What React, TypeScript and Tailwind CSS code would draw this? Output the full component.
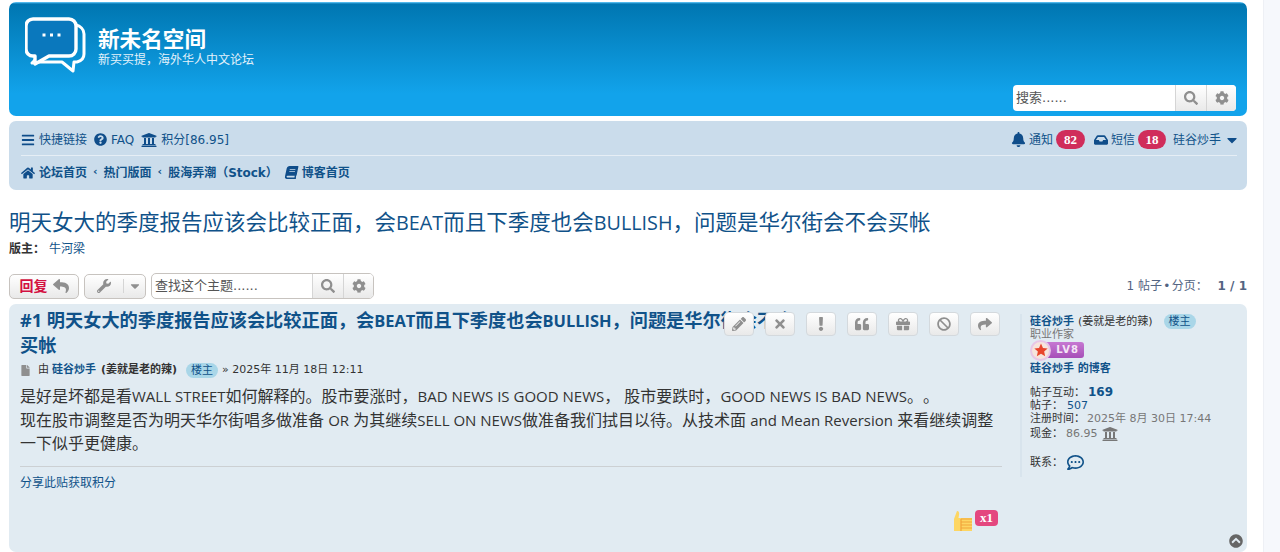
import {
  FaBars,
  FaBan,
  FaBell,
  FaBook,
  FaCaretDown,
  FaChevronCircleUp,
  FaCog,
  FaExclamation,
  FaFile,
  FaGift,
  FaHome,
  FaInbox,
  FaPencilAlt,
  FaQuestionCircle,
  FaQuoteLeft,
  FaRegCommentDots,
  FaReply,
  FaSearch,
  FaShare,
  FaTimes,
  FaUniversity,
  FaWrench,
} from "react-icons/fa";

const sans = "font-['DejaVu_Sans','Noto_Sans_CJK_SC',sans-serif]";
const body = "font-['Open_Sans','Noto_Sans_CJK_SC',sans-serif] [text-spacing-trim:space-all]";

function Logo() {
  return (
    <svg width="62" height="58" viewBox="0 0 62 58" fill="none" className="ml-[1px] shrink-0">
      <path
        d="M51 8c4 1 8 4 8 9v20c0 4-3 7-7 8h-3l-1 9-11-9H14l-7 1 6-6"
        stroke="#fff"
        strokeWidth="3"
        strokeLinejoin="round"
      />
      <path
        d="M8 2h36c4 0 7 3 7 7v23c0 4-3 7-7 7H24L10 47v-8H8c-4 0-7-3-7-7V9c0-4 3-7 7-7z"
        stroke="#fff"
        strokeWidth="3.400"
        strokeLinejoin="round"
        fill="#0a78bd"
      />
      <rect x="17.500" y="16.500" width="3" height="3" fill="#fff" />
      <rect x="25" y="16.500" width="3" height="3" fill="#fff" />
      <rect x="32.500" y="16.500" width="3" height="3" fill="#fff" />
    </svg>
  );
}

function Medal() {
  return (
    <div className="flex h-[20px] items-center">
      <div className="relative z-10 flex h-[21px] w-[21px] items-center justify-center rounded-full border-2 border-[#e8c6e6] bg-[#f6e4dc]">
        <svg width="14" height="14" viewBox="0 0 24 24">
          <path d="M12 1l3.400 7.400 8 .9-6 5.400 1.700 7.900L12 18.600l-7.100 4 1.700-7.900-6-5.400 8-.9z" fill="#e8452c" />
        </svg>
      </div>
      <div className="-ml-[6px] flex h-[16px] w-[39px] items-center justify-end rounded-r-[3px] bg-gradient-to-b from-[#c678d2] to-[#a64fb8] pr-[5px] text-[10px] font-bold leading-none tracking-[1px] text-[#f4e6f6]">
        LV8
      </div>
    </div>
  );
}

function ThumbUp() {
  return (
    <svg width="20" height="22" viewBox="0 0 20 22">
      <path d="M1 21V9l3-8c2 0 2.500 2 2 4l-.5 3H19v13z" fill="#fdd663" />
      <path d="M8 9h11M8 12h11M8 15h11M8 18h11M8 9v12" stroke="#f2a33a" strokeWidth="1.200" fill="none" />
    </svg>
  );
}

function ActionButton({ children }: { children: React.ReactNode }) {
  return (
    <div className="flex h-[24px] w-[30px] items-center justify-center rounded-[4px] border border-[#d4d9dd] bg-gradient-to-b from-white to-[#e9e9e9] text-[14px] text-[#8f8f8f]">
      {children}
    </div>
  );
}

function SearchBox({ placeholder, width, round }: { placeholder: string; width: string; round: string }) {
  return (
    <div className={`flex h-[26px] items-stretch overflow-hidden bg-white ${width} ${round}`}>
      <div className="flex flex-1 items-center pl-[3px] text-[13px] text-[#555]">{placeholder}</div>
      <div className="flex w-[31px] items-center justify-center border-l border-[#d5d5d5] bg-gradient-to-b from-white to-[#e9e9e9] text-[14px] text-[#8f8f8f]">
        <FaSearch />
      </div>
      <div className="flex w-[30px] items-center justify-center border-l border-[#d5d5d5] bg-gradient-to-b from-white to-[#e9e9e9] text-[14px] text-[#8f8f8f]">
        <FaCog />
      </div>
    </div>
  );
}

// latin runs in the post are set a bit smaller than the CJK around them
function En({ children }: { children: React.ReactNode }) {
  return <span className="text-[15px]">{children}</span>;
}

export default function App() {
  return (
    <div className={`flex h-[552px] w-[1280px] overflow-hidden bg-white ${sans}`}>
      <div className="w-[1238px] ml-[9px] shrink-0 pt-[2px]">
        <header className="flex h-[114px] items-start justify-between rounded-[7px] bg-[linear-gradient(to_bottom,#6aceff_0px,#0076b1_2px,#12a3eb_92px,#12a3eb_100%)] pl-[15px] pr-[11px] pt-[15px]">
          <div className="flex gap-[11px]">
            <Logo />
            <div className="pt-[10px] text-white">
              <div className="text-[21.6px] font-bold leading-[26px]">新未名空间</div>
              <div className="text-[12px] leading-[14px] text-[#e4f2fb]">新买买提，海外华人中文论坛</div>
            </div>
          </div>
          <div className="mt-[68px]">
            <SearchBox placeholder="搜索......" width="w-[223px]" round="rounded-[4px]" />
          </div>
        </header>

        <nav className="mt-[5px] h-[69px] rounded-[7px] bg-[#cadceb] pl-[12px] pr-[10px] text-[12px] text-[#105289]">
          <div className="flex h-[35px] items-center justify-between border-b border-[#e6eef5] pt-[3px]">
            <div className="flex items-center gap-[7px]">
              <span className="flex items-center gap-[4px]">
                <FaBars className="text-[14px] text-[#0f4d8a]" />
                快捷链接
              </span>
              <span className="flex items-center gap-[4px]">
                <FaQuestionCircle className="text-[13px] text-[#0f4d8a]" />
                FAQ
              </span>
              <span className="flex items-center gap-[4px]">
                <FaUniversity className="text-[16px] text-[#0f4d8a]" />
                积分[86.95]
              </span>
            </div>
            <div className="flex items-center">
              <FaBell className="mr-[3px] text-[15px] text-[#0f4d8a]" />
              通知
              <span className="ml-[3px] flex h-[19px] w-[29px] items-center justify-center rounded-[10px] bg-[#d02d5b] font-['Liberation_Serif',serif] text-[13px] font-bold text-white">
                82
              </span>
              <FaInbox className="ml-[9px] mr-[3px] text-[14px] text-[#0f4d8a]" />
              短信
              <span className="ml-[3px] flex h-[19px] w-[28px] items-center justify-center rounded-[10px] bg-[#d02d5b] font-['Liberation_Serif',serif] text-[13px] font-bold text-white">
                18
              </span>
              <span className="ml-[7px]">硅谷炒手</span>
              <FaCaretDown className="-mr-[3px] ml-[3px] text-[16px] text-[#0f4d8a]" />
            </div>
          </div>
          <div className="flex h-[33px] items-center font-bold">
            <FaHome className="mr-[4px] text-[14px] text-[#0f4d8a]" />
            论坛首页
            <span className="mx-[6px] text-[11px]">‹</span>
            热门版面
            <span className="mx-[6px] text-[11px]">‹</span>
            股海弄潮（Stock）
            <FaBook className="ml-[7px] mr-[4px] -skew-x-12 text-[13px] text-[#0f4d8a]" />
            博客首页
          </div>
        </nav>

        <h2 className={`mt-[18px] text-[21.5px] leading-[27px] text-[#105289] ${body}`}>
          明天女大的季度报告应该会比较正面，会<span className="text-[19.8px]">BEAT</span>而且下季度也会
          <span className="text-[19.8px]">BULLISH</span>，问题是华尔街会不会买帐
        </h2>
        <div className="mt-[5px] flex h-[16px] items-center text-[12px]">
          <b className="text-[#333]">版主：</b>
          <span className="ml-[4px] text-[#105289]">牛河梁</span>
        </div>

        <div className="mt-[16px] flex h-[26px] items-center">
          <div className="flex h-[25px] w-[70px] items-center justify-center gap-[5px] rounded-[5px] border border-[#c7c3bf] bg-gradient-to-b from-white to-[#e9e9e9]">
            <span className="text-[14px] font-bold text-[#d31141]">回复</span>
            <FaReply className="text-[16px] text-[#8f8f8f]" />
          </div>
          <div className="ml-[5px] flex h-[25px] w-[62px] items-center rounded-[5px] border border-[#c7c3bf] bg-gradient-to-b from-white to-[#e9e9e9] text-[#8f8f8f]">
            <div className="flex h-full w-[38px] items-center justify-center">
              <FaWrench className="text-[14px]" />
            </div>
            <div className="flex flex-1 items-center justify-center border-l border-[#d5d5d5]">
              <FaCaretDown className="text-[14px]" />
            </div>
          </div>
          <div className="ml-[5px]">
            <SearchBox
              placeholder="查找这个主题......"
              width="w-[223px] border border-[#c7c3bf]"
              round="rounded-[5px]"
            />
          </div>
          <div className="ml-auto text-[12px] text-[#536482]">
            1 帖子 <span className="-mx-[2.5px]">•</span> 分页： <b className="ml-[6px]">1 / 1</b>
          </div>
        </div>

        <article className="relative mt-[5px] flex h-[248px] rounded-[7px] bg-[#e1ebf2] pl-[11px]">
          <div className="w-[982px] shrink-0">
            <h3 className={`w-[790px] pt-[4px] text-[18.2px] font-bold leading-[24px] text-[#105289] ${body}`}>
              #1 明天女大的季度报告应该会比较正面，会<span className="text-[16.400px]">BEAT</span>而且下季度也会
              <span className="text-[16.400px]">BULLISH</span>，问题是华尔街会不会买帐
            </h3>
            <div className="mt-[3px] flex h-[20px] items-center text-[11px] text-[#333]">
              <FaFile className="mr-[7px] text-[11px] text-[#8f8f8f]" />由
              <span className="ml-[3px] font-bold text-[#105289]">硅谷炒手</span>
              <span className="ml-[5px] font-bold">(姜就是老的辣)</span>
              <span className="ml-[9px] rounded-[8px] bg-[#a9d6e8] px-[5px] leading-[15px] text-[#105289]">楼主</span>
              <span className="ml-[4px]">» 2025年 11月 18日 12:11</span>
            </div>
            <div className={`mt-[5px] text-[16px] leading-[23.5px] text-[#333] ${body}`}>
              <p>
                是好是坏都是看<En>WALL STREET</En>如何解释的。股市要涨时，<En>BAD NEWS IS GOOD NEWS</En>， 股市要跌时，
                <En>GOOD NEWS IS BAD NEWS</En>。。
              </p>
              <p>
                现在股市调整是否为明天华尔街唱多做准备 <En>OR</En> 为其继续<En>SELL ON NEWS</En>做准备我们拭目以待。从技术面{" "}
                <En>and Mean Reversion</En> 来看继续调整一下似乎更健康。
              </p>
            </div>
            <div className="mt-[10px] border-t border-[#ccd0d3] pt-[7px] text-[12px] leading-[18px] text-[#105289]">
              分享此贴获取积分
            </div>
            <div className="mt-[18px] flex justify-end gap-[2px] pr-[4px]">
              <ThumbUp />
              <span className="h-[16px] rounded-[4px] bg-[#e4477f] px-[5px] font-['Liberation_Serif',serif] text-[13px] font-bold leading-[16px] text-white">
                x1
              </span>
            </div>
          </div>

          <div className="absolute right-[247px] top-[8px] flex gap-[11px]">
            {[
              <FaPencilAlt key="edit" />,
              <FaTimes key="delete" />,
              <FaExclamation key="report" />,
              <FaQuoteLeft key="quote" />,
              <FaGift key="gift" />,
              <FaBan key="ban" />,
              <FaShare key="share" />,
            ].map((icon) => (
              <ActionButton key={icon.key}>{icon}</ActionButton>
            ))}
          </div>

          <aside className="ml-[18px] mt-[10px] h-[163px] w-[210px] border-l-2 border-[#d8e4ed] pl-[8px] text-[11px] leading-[13px] text-[#333]">
            <div className="flex items-center">
              <span className="font-bold text-[#105289]">硅谷炒手</span>
              <span className="ml-[4px]">(姜就是老的辣)</span>
              <span className="ml-[11px] rounded-[8px] bg-[#a9d6e8] px-[5px] leading-[15px] text-[#105289]">楼主</span>
            </div>
            <div className="-mt-[1px] text-[#777]">职业作家</div>
            <div className="-mt-[1px]">
              <Medal />
            </div>
            <div className="mt-[2px] font-bold text-[#105289]">硅谷炒手 的博客</div>
            <div className="mt-[11px] flex h-[13px] items-center">
              帖子互动：<b className="ml-[3px] text-[12px] text-[#105289]">169</b>
            </div>
            <div className="flex h-[13px] items-center">
              帖子：<span className="ml-[4px] text-[#105289]">507</span>
            </div>
            <div className="flex h-[13px] items-center">
              注册时间：<span className="ml-[2px] text-[#777]">2025年 8月 30日 17:44</span>
            </div>
            <div className="flex h-[17px] items-center">
              现金：<span className="ml-[3px] text-[#777]">86.95</span>
              <FaUniversity className="ml-[4px] text-[16px] text-[#777]" />
            </div>
            <div className="mt-[12px] flex items-center">
              联系：
              <FaRegCommentDots className="ml-[4px] text-[17px] text-[#105289]" />
            </div>
          </aside>

          <FaChevronCircleUp className="absolute bottom-[4px] right-[4px] text-[14px] text-[#666]" />
        </article>
      </div>
      <div className="ml-[16px] flex-1 border-l border-[#eef0f5] bg-[#f6f8fc]" />
    </div>
  );
}
